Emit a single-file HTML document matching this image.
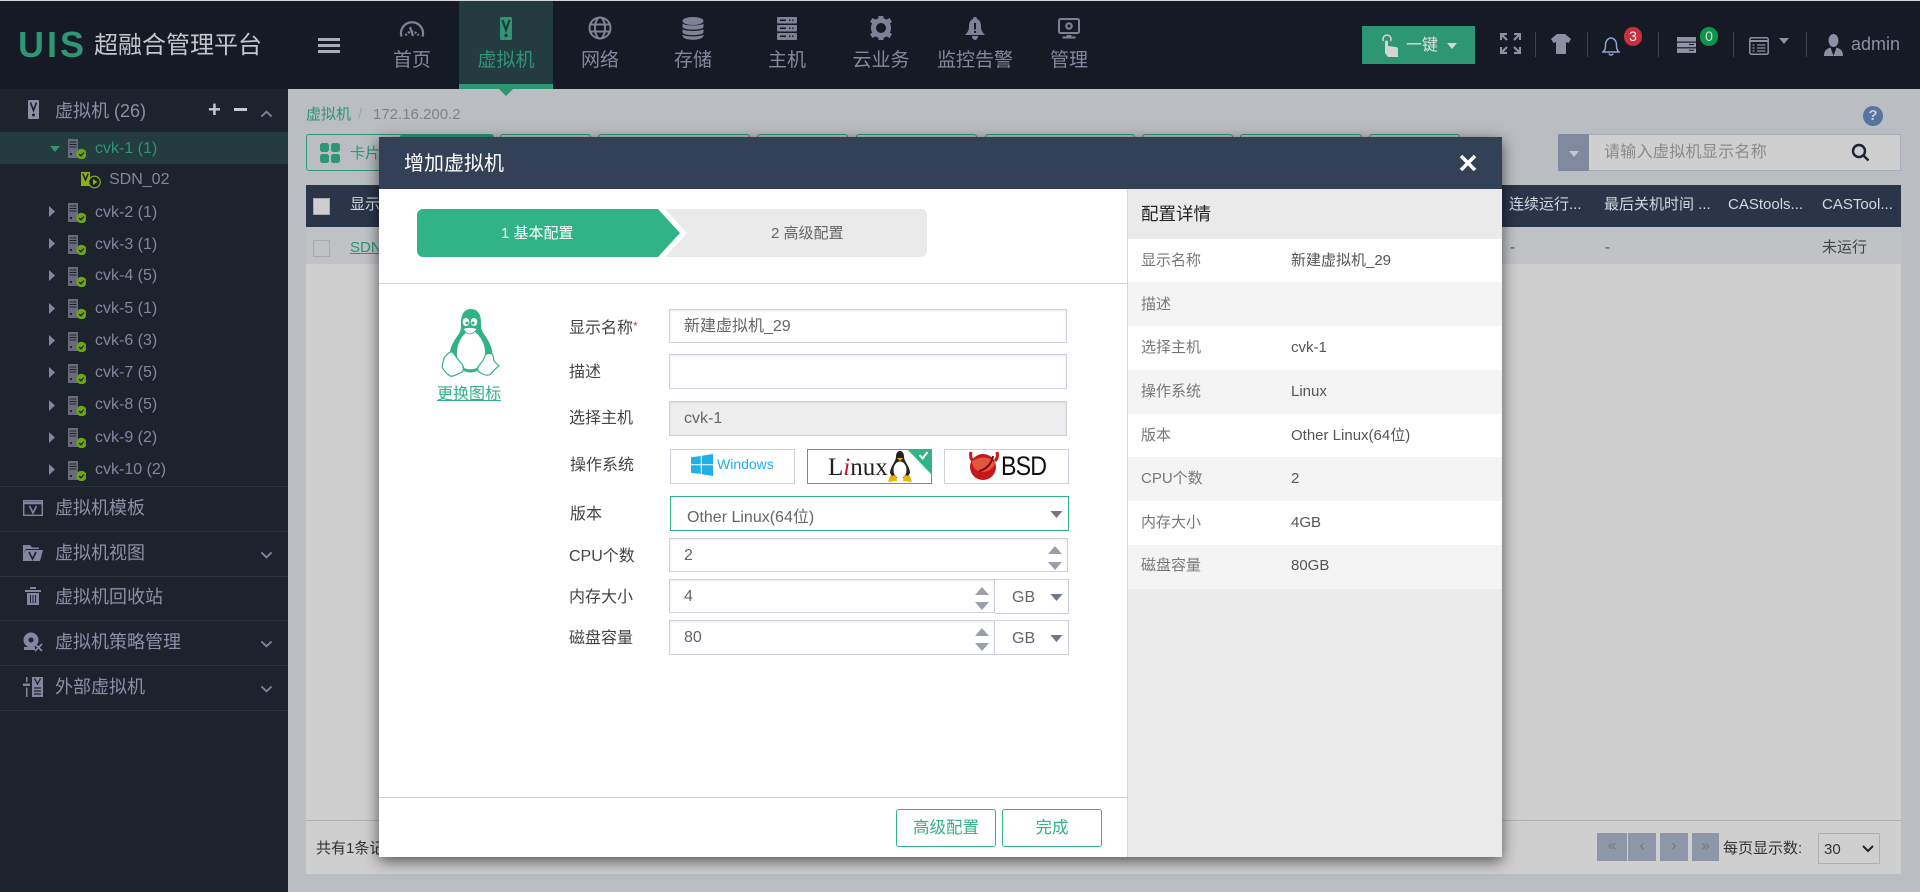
<!DOCTYPE html>
<html lang="zh"><head><meta charset="utf-8"><title>UIS</title>
<style>
*{box-sizing:border-box}
html,body{margin:0;padding:0;width:1920px;height:892px;overflow:hidden;background:#babdc2;font-family:"Liberation Sans","Noto Sans CJK SC",sans-serif}
.a{position:absolute}
.t{position:absolute;white-space:nowrap;line-height:20px;height:20px;margin-top:1px}
.nav{position:absolute;top:51px;width:94px;text-align:center;font-size:19px;line-height:20px;color:#83889c;white-space:nowrap}
.tree{font-size:16px;color:#8187a0}
.menu{font-size:18px;color:#8b90a6}
.lab{font-size:16px;color:#444}
.val{font-size:16px;color:#666}
.rl{font-size:15px;color:#777;left:1141px}
.rv{font-size:15px;color:#555;left:1291px}
.inp{position:absolute;background:#fff;border:1px solid #cfcfdc;box-shadow:inset 0 1px 2px rgba(0,0,0,.08)}
.div{position:absolute;width:1px;top:32px;height:25px;background:#3e424f}
.sep{position:absolute;left:0;width:288px;height:1px;background:#2c333d}
.tab{position:absolute;top:134px;height:37px;border:1px solid #2d9673;border-radius:3px}
.th{font-size:15px;color:#d4d8e0}
.pg{position:absolute;top:833px;height:28px;background:#8e97a9;color:#6f7788;font-size:15px;text-align:center;line-height:26px}
</style></head><body>
<svg width="0" height="0" style="position:absolute"><defs>
<symbol id="srv" viewBox="0 0 18 20"><rect x="0" y="0" width="10" height="19" fill="#666c7c"/><path d="M1.5 3h7M1.5 5.5h7M1.5 8h7" stroke="#1c232c" stroke-width="1"/><rect x="2" y="14" width="2" height="2" fill="#1c232c"/><circle cx="13.5" cy="15" r="5.2" fill="#6aa512"/><path d="M11.200 15l1.700 1.800 3-3.200" fill="none" stroke="#1c232c" stroke-width="1.300"/></symbol>
<symbol id="chev" viewBox="0 0 14 8"><path d="M1.5 1.2L7 6.5l5.5-5.3" fill="none" stroke="#7b84a0" stroke-width="2"/></symbol>
<symbol id="tri" viewBox="0 0 14 8"><path d="M0 0h14L7 8z"/></symbol>
</defs></svg>

<!-- header -->
<div class="a" style="left:0;top:0;width:1920px;height:1px;background:#d8d8d8"></div>
<div class="a" style="left:0;top:1px;width:1920px;height:88px;background:#161a25"></div>
<div class="t" style="left:18px;top:25px;margin-top:0;height:40px;line-height:40px;font-size:36px;font-weight:bold;color:#2d9673;letter-spacing:3px">UIS</div>
<div class="t" style="left:94px;top:33px;height:24px;line-height:24px;font-size:24px;color:#c4c6cc">超融合管理平台</div>
<div class="a" style="left:318px;top:38px;width:22px;height:3px;background:#a9adb9"></div>
<div class="a" style="left:318px;top:44px;width:22px;height:3px;background:#a9adb9"></div>
<div class="a" style="left:318px;top:50px;width:22px;height:3px;background:#a9adb9"></div>

<div class="a" style="left:459px;top:1px;width:94px;height:83px;background:#243b3f"></div>
<div class="a" style="left:459px;top:84px;width:94px;height:5px;background:#2d9673"></div>
<svg class="a" style="left:499px;top:89px" width="14" height="7"><path d="M0 0h14L7 7z" fill="#2d9673"/></svg>

<div class="nav" style="left:365px">首页</div>
<div class="nav" style="left:459px;color:#2d9673">虚拟机</div>
<div class="nav" style="left:553px">网络</div>
<div class="nav" style="left:646px">存储</div>
<div class="nav" style="left:740px">主机</div>
<div class="nav" style="left:834px">云业务</div>
<div class="nav" style="left:928px">监控告警</div>
<div class="nav" style="left:1022px">管理</div>

<!-- nav icons -->
<svg class="a" style="left:399px;top:20px" width="26" height="18" viewBox="0 0 26 18"><path d="M2.500 16.500A11 11 0 1 1 23.500 16.500" fill="none" stroke="#7d8296" stroke-width="2.200"/><path d="M6.500 15.500A7.500 7.500 0 0 1 19.500 15.500" fill="none" stroke="#7d8296" stroke-width="2.200" stroke-dasharray="2 1.500"/><path d="M11 7l3 9" stroke="#7d8296" stroke-width="2.200"/></svg>
<svg class="a" style="left:500px;top:17px" width="12" height="23" viewBox="0 0 12 23"><rect width="12" height="23" rx="1.500" fill="#2d9673"/><path d="M2.500 3l3.500 10 3.500-10" fill="none" stroke="#243b3f" stroke-width="2.200"/><circle cx="6" cy="18.500" r="1.800" fill="#243b3f"/></svg>
<svg class="a" style="left:588px;top:16px" width="24" height="24" viewBox="0 0 24 24" fill="none" stroke="#7d8296" stroke-width="2"><circle cx="12" cy="12" r="10.500"/><ellipse cx="12" cy="12" rx="5" ry="10.500"/><path d="M2 8.500h20M2 15.500h20"/></svg>
<svg class="a" style="left:682px;top:17px" width="22" height="23" viewBox="0 0 22 23" fill="#7d8296"><ellipse cx="11" cy="4" rx="10.500" ry="4"/><path d="M.5 6.500c2 2.500 19 2.500 21 0v3.500c-1 3.500-20 3.500-21 0zM.5 12c2 2.500 19 2.500 21 0v3.500c-1 3.500-20 3.500-21 0zM.5 17.500c2 2.500 19 2.500 21 0V19c-1 5-20 5-21 0z"/></svg>
<svg class="a" style="left:777px;top:17px" width="20" height="23" viewBox="0 0 20 23" fill="#7d8296"><rect width="20" height="6.500" rx="1"/><rect y="8" width="20" height="6.500" rx="1"/><rect y="16" width="20" height="7" rx="1"/><path d="M3 2.500h6v1.500H3zM12 2.500h1.500v1.500H12zM15 2.500h1.500v1.500H15zM3 10.500h6V12H3zM12 10.500h1.500V12H12zM15 10.500h1.500V12H15zM3 18.500h6V20H3zM12 18.500h1.500V20H12zM15 18.500h1.500V20H15z" fill="#161a25"/></svg>
<svg class="a" style="left:869px;top:16px" width="24" height="24" viewBox="0 0 24 24"><circle cx="12" cy="12" r="7.500" fill="none" stroke="#7d8296" stroke-width="5"/><path d="M9.500 0h5v5h-5zM9.500 19h5v5h-5zM1 6l2.500-4 4.500 2.500-2.500 4zM1 18l2.500 4 4.500-2.500-2.500-4zM23 6l-2.500-4-4.500 2.500 2.500 4zM23 18l-2.500 4-4.500-2.500 2.500-4z" fill="#7d8296"/></svg>
<svg class="a" style="left:965px;top:17px" width="20" height="23" viewBox="0 0 20 23"><path d="M10 0c1.500 0 2 1 2 2 3 1 4 4 4 7 0 4 1 6 4 9H0c3-3 4-5 4-9 0-3 1-6 4-7 0-1 .5-2 2-2z" fill="#7d8296"/><path d="M7 19h6c0 2-1.300 4-3 4s-3-2-3-4z" fill="#7d8296"/><rect x="9" y="6" width="2" height="6.500" fill="#161a25"/><rect x="9" y="14" width="2" height="2" fill="#161a25"/></svg>
<svg class="a" style="left:1058px;top:18px" width="22" height="21" viewBox="0 0 22 21"><rect x="1" y="1" width="20" height="14" rx="1.500" fill="none" stroke="#7d8296" stroke-width="2"/><path d="M8.500 17h5v1.500h4V20.500h-13V18.500h4z" fill="#7d8296"/><circle cx="11" cy="8" r="2.700" fill="none" stroke="#7d8296" stroke-width="2.200"/></svg>

<!-- header right -->
<div class="a" style="left:1362px;top:26px;width:113px;height:38px;background:#2d9673"></div>
<svg class="a" style="left:1381px;top:33px" width="20" height="24" viewBox="0 0 20 24"><path d="M4 20V9c0-2 3-2 3 0v4l8 1c2 .500 2 2 2 3v7H7z" fill="#d5d5d0"/><path d="M2.500 8a4 4 0 1 1 7 0" fill="none" stroke="#d5d5d0" stroke-width="1.500"/></svg>
<div class="t" style="left:1406px;top:35px;font-size:16px;color:#dfe3e0">一键</div>
<svg class="a" style="left:1447px;top:43px" width="10" height="6"><path d="M0 0h10L5 6z" fill="#d5d8d5"/></svg>

<svg class="a" style="left:1500px;top:33px" width="21" height="21" viewBox="0 0 21 21" fill="none" stroke="#8b90a3" stroke-width="2.200"><path d="M1 7V1h6M1 1l6 6M14 1h6v6M20 1l-6 6M1 14v6h6M1 20l6-6M20 14v6h-6M20 20l-6-6"/></svg>
<div class="div" style="left:1535px"></div>
<svg class="a" style="left:1551px;top:34px" width="20" height="20" viewBox="0 0 20 20"><path d="M6 0h8l6 5-2.500 4-2.500-1v12H5V8L2.500 9 0 5z" fill="#8b90a3"/></svg>
<div class="div" style="left:1587px"></div>
<svg class="a" style="left:1602px;top:36px" width="18" height="20" viewBox="0 0 18 20" fill="none" stroke="#8fa4d0" stroke-width="1.500"><path d="M1 16c2-2 2.500-3 2.500-7S6 2 9 2s5.500 3 5.500 7 .5 5 2.500 7zM7 17.500c.5 2 3.500 2 4 0"/></svg>
<div class="a" style="left:1624px;top:27px;width:18px;height:19px;border-radius:9px;background:#c8303f;color:#eee;font-size:14px;line-height:19px;text-align:center">3</div>
<div class="div" style="left:1658px"></div>
<svg class="a" style="left:1677px;top:37px" width="20" height="16" viewBox="0 0 20 16"><rect width="19" height="4.500" fill="#8f94a8"/><rect y="5.700" width="19" height="4.500" fill="#8f94a8"/><rect y="11.400" width="19" height="4.500" fill="#8f94a8"/><path d="M12 7.500h5M12 13.200h5" stroke="#161a25" stroke-width="1"/></svg>
<div class="a" style="left:1700px;top:27px;width:18px;height:19px;border-radius:9px;background:#0b964b;color:#ddd;font-size:14px;line-height:19px;text-align:center">0</div>
<div class="div" style="left:1733px"></div>
<svg class="a" style="left:1749px;top:37px" width="20" height="18" viewBox="0 0 20 18" fill="none" stroke="#8b90a3" stroke-width="1.500"><rect x=".8" y=".8" width="18.400" height="16.400" rx="1.500"/><path d="M1 4h18" stroke-width="2"/><path d="M3.500 8h2M8 8h8.500M3.500 11h2M8 11h8.500M3.500 14h2M8 14h8.500" stroke-width="1.300"/></svg>
<svg class="a" style="left:1779px;top:38px" width="10" height="6"><path d="M0 0h10L5 6z" fill="#8b90a3"/></svg>
<div class="div" style="left:1806px"></div>
<svg class="a" style="left:1824px;top:34px" width="19" height="22" viewBox="0 0 19 22"><ellipse cx="9.500" cy="6.500" rx="5" ry="6.500" fill="#8b90a3"/><path d="M0 22c0-5 2-7 6.500-8.500L9.500 22l3-8.500C17 15 19 17 19 22z" fill="#8b90a3"/></svg>
<div class="t" style="left:1851px;top:33px;font-size:18px;color:#8b90a5">admin</div>

<!-- sidebar -->
<div class="a" style="left:0;top:89px;width:288px;height:803px;background:#1c232c"></div>
<div class="a" style="left:0;top:132px;width:288px;height:32px;background:#243b3f"></div>
<svg class="a" style="left:28px;top:100px" width="11" height="19" viewBox="0 0 11 19"><rect width="11" height="19" rx="1" fill="#8b90a3"/><path d="M2.500 2.500l3 8 3-8" fill="none" stroke="#1c232c" stroke-width="1.700"/><circle cx="5.500" cy="15" r="1.500" fill="#1c232c"/></svg>
<div class="t menu" style="left:55px;top:100px">虚拟机 (26)</div>
<div class="t" style="left:208px;top:98px;font-size:22px;font-weight:bold;color:#c6c9d2;line-height:22px;height:22px">+</div>
<div class="a" style="left:234px;top:108px;width:13px;height:3px;background:#c6c9d2"></div>
<svg class="a" style="left:260px;top:110px;transform:rotate(180deg)" width="13" height="8"><use href="#chev"/></svg>

<svg class="a" style="left:50px;top:146px" width="10" height="6"><path d="M0 0h10L5 6z" fill="#2d9673"/></svg>
<svg class="a" style="left:68px;top:139px" width="18" height="20"><use href="#srv"/></svg>
<div class="t tree" style="left:95px;top:138px;color:#2d9673">cvk-1 (1)</div>
<svg class="a" style="left:81px;top:172px" width="20" height="17" viewBox="0 0 20 17"><rect width="9" height="14" fill="#8db018"/><path d="M1.800 1.500l2.700 6.500 2.700-6.500" fill="none" stroke="#1c232c" stroke-width="1.500"/><circle cx="13.500" cy="10" r="5.800" fill="#1c232c" stroke="#8db018" stroke-width="1.100"/><path d="M12 7l4.300 3-4.300 3z" fill="#8db018"/></svg>
<div class="t tree" style="left:109px;top:169px">SDN_02</div>

<!-- tree rows -->
<svg class="a" style="left:49px;top:206px" width="7" height="11"><path d="M0 0l6 5.500L0 11z" fill="#8187a0"/></svg>
<svg class="a" style="left:68px;top:203px" width="18" height="20"><use href="#srv"/></svg>
<div class="t tree" style="left:95px;top:202px">cvk-2 (1)</div>
<svg class="a" style="left:49px;top:238px" width="7" height="11"><path d="M0 0l6 5.500L0 11z" fill="#8187a0"/></svg>
<svg class="a" style="left:68px;top:235px" width="18" height="20"><use href="#srv"/></svg>
<div class="t tree" style="left:95px;top:234px">cvk-3 (1)</div>
<svg class="a" style="left:49px;top:270px" width="7" height="11"><path d="M0 0l6 5.500L0 11z" fill="#8187a0"/></svg>
<svg class="a" style="left:68px;top:267px" width="18" height="20"><use href="#srv"/></svg>
<div class="t tree" style="left:95px;top:265px">cvk-4 (5)</div>
<svg class="a" style="left:49px;top:303px" width="7" height="11"><path d="M0 0l6 5.500L0 11z" fill="#8187a0"/></svg>
<svg class="a" style="left:68px;top:299px" width="18" height="20"><use href="#srv"/></svg>
<div class="t tree" style="left:95px;top:298px">cvk-5 (1)</div>
<svg class="a" style="left:49px;top:335px" width="7" height="11"><path d="M0 0l6 5.500L0 11z" fill="#8187a0"/></svg>
<svg class="a" style="left:68px;top:332px" width="18" height="20"><use href="#srv"/></svg>
<div class="t tree" style="left:95px;top:330px">cvk-6 (3)</div>
<svg class="a" style="left:49px;top:367px" width="7" height="11"><path d="M0 0l6 5.500L0 11z" fill="#8187a0"/></svg>
<svg class="a" style="left:68px;top:364px" width="18" height="20"><use href="#srv"/></svg>
<div class="t tree" style="left:95px;top:362px">cvk-7 (5)</div>
<svg class="a" style="left:49px;top:400px" width="7" height="11"><path d="M0 0l6 5.500L0 11z" fill="#8187a0"/></svg>
<svg class="a" style="left:68px;top:396px" width="18" height="20"><use href="#srv"/></svg>
<div class="t tree" style="left:95px;top:394px">cvk-8 (5)</div>
<svg class="a" style="left:49px;top:432px" width="7" height="11"><path d="M0 0l6 5.500L0 11z" fill="#8187a0"/></svg>
<svg class="a" style="left:68px;top:428px" width="18" height="20"><use href="#srv"/></svg>
<div class="t tree" style="left:95px;top:427px">cvk-9 (2)</div>
<svg class="a" style="left:49px;top:464px" width="7" height="11"><path d="M0 0l6 5.500L0 11z" fill="#8187a0"/></svg>
<svg class="a" style="left:68px;top:461px" width="18" height="20"><use href="#srv"/></svg>
<div class="t tree" style="left:95px;top:459px">cvk-10 (2)</div>

<div class="sep" style="top:486px"></div>
<div class="sep" style="top:531px"></div>
<div class="sep" style="top:576px"></div>
<div class="sep" style="top:620px"></div>
<div class="sep" style="top:665px"></div>
<div class="sep" style="top:710px"></div>

<svg class="a" style="left:23px;top:500px" width="20" height="16" viewBox="0 0 20 16" fill="none" stroke="#8187a0"><rect x=".7" y=".7" width="18.600" height="14.600" stroke-width="1.400"/><path d="M1 3h18" stroke-width="2.400"/><path d="M6.500 6l3.500 7 3.500-7" stroke-width="1.700"/></svg>
<div class="t menu" style="left:55px;top:497px">虚拟机模板</div>
<svg class="a" style="left:23px;top:545px" width="20" height="16" viewBox="0 0 20 16"><path d="M0 0h7l2 2.500h7V4H3L0 9z M3 5h17l-3 11H0V9z" fill="#8187a0"/><path d="M6 7l3.500 7L13 7" fill="none" stroke="#1c232c" stroke-width="1.700"/></svg>
<div class="t menu" style="left:55px;top:542px">虚拟机视图</div>
<svg class="a" style="left:260px;top:551px" width="13" height="8"><use href="#chev"/></svg>
<svg class="a" style="left:25px;top:587px" width="16" height="18" viewBox="0 0 16 18" fill="#8187a0"><path d="M0 3h16v2H0zM5 0h6v2H5zM2 6h12v12H2z"/><path d="M5.500 8v8M8 8v8M10.500 8v8" stroke="#1c232c" stroke-width="1"/></svg>
<div class="t menu" style="left:55px;top:586px">虚拟机回收站</div>
<svg class="a" style="left:23px;top:632px" width="20" height="20" viewBox="0 0 20 20"><circle cx="8" cy="8" r="7.500" fill="#8187a0"/><circle cx="8" cy="8" r="2.500" fill="#1c232c"/><rect x="1" y="15" width="11" height="3" fill="#8187a0"/><path d="M12 12l7 7M19 12l-7 7" stroke="#8187a0" stroke-width="1.800"/></svg>
<div class="t menu" style="left:55px;top:631px">虚拟机策略管理</div>
<svg class="a" style="left:260px;top:640px" width="13" height="8"><use href="#chev"/></svg>
<svg class="a" style="left:23px;top:677px" width="20" height="20" viewBox="0 0 20 20"><path d="M3 0h1.500v5H3zM0 6.500h7v2.500H0zM3 10.500h1.500V20H3z" fill="#8187a0"/><rect x="9" y="0" width="11" height="20" fill="#8187a0"/><path d="M11.500 1.500l3 5.500 3-5.500" fill="none" stroke="#1c232c" stroke-width="1.300"/><path d="M11 11h7M11 14h7M11 17h7" stroke="#1c232c" stroke-width="1.200"/></svg>
<div class="t menu" style="left:55px;top:676px">外部虚拟机</div>
<svg class="a" style="left:260px;top:685px" width="13" height="8"><use href="#chev"/></svg>

<!-- content -->
<div class="t" style="left:306px;top:104px;font-size:15px;color:#2f9473">虚拟机</div>
<div class="t" style="left:358px;top:104px;font-size:15px;color:#a1a4aa">/</div>
<div class="t" style="left:373px;top:104px;font-size:15px;color:#808287">172.16.200.2</div>
<svg class="a" style="left:1863px;top:106px" width="20" height="20" viewBox="0 0 20 20"><circle cx="10" cy="10" r="10" fill="#55749f"/></svg>
<div class="t" style="left:1863px;top:105px;width:20px;text-align:center;font-size:15px;font-weight:bold;color:#c8cdd6">?</div>

<div class="tab" style="left:306px;width:100px"></div>
<div class="tab" style="left:400px;width:94px;background:#2d9673"></div>
<div class="tab" style="left:500px;width:91px"></div>
<div class="tab" style="left:598px;width:152px"></div>
<div class="tab" style="left:757px;width:91px"></div>
<div class="tab" style="left:856px;width:121px"></div>
<div class="tab" style="left:985px;width:150px"></div>
<div class="tab" style="left:1142px;width:91px"></div>
<div class="tab" style="left:1240px;width:122px"></div>
<div class="tab" style="left:1369px;width:91px"></div>
<svg class="a" style="left:320px;top:143px" width="20" height="20" viewBox="0 0 20 20" fill="#2d9673"><rect width="9" height="9" rx="2.500"/><rect x="11" width="9" height="9" rx="2.500"/><rect y="11" width="9" height="9" rx="2.500"/><rect x="11" y="11" width="9" height="9" rx="2.500"/></svg>
<div class="t" style="left:350px;top:143px;font-size:15px;color:#2d9673">卡片</div>

<div class="a" style="left:1558px;top:134px;width:343px;height:37px;background:#cfcfcf;border:1px solid #a9acb8"></div>
<div class="a" style="left:1558px;top:134px;width:31px;height:37px;background:#8189a0"></div>
<svg class="a" style="left:1569px;top:151px" width="10" height="6"><path d="M0 0h10L5 6z" fill="#c4c7d0"/></svg>
<div class="t" style="left:1604px;top:142px;font-size:16px;letter-spacing:.3px;color:#8a8a8a">请输入虚拟机显示名称</div>
<svg class="a" style="left:1851px;top:143px" width="19" height="19" viewBox="0 0 19 19" fill="none" stroke="#1b2430" stroke-width="2.400"><circle cx="8" cy="8" r="6"/><path d="M12.500 12.500l5 5"/></svg>

<div class="a" style="left:306px;top:185px;width:1595px;height:42px;background:#2a3549"></div>
<div class="a" style="left:306px;top:227px;width:1595px;height:37px;background:#c0c2c6"></div>
<div class="a" style="left:306px;top:264px;width:1595px;height:610px;background:#cfcfcf"></div>
<div class="a" style="left:306px;top:820px;width:1595px;height:1px;background:#aeb0b4"></div>
<div class="a" style="left:313px;top:198px;width:17px;height:17px;background:#cfcfcf;border:1px solid #a7a9b0"></div>
<div class="a" style="left:313px;top:240px;width:17px;height:17px;border:1px solid #a7a9b0"></div>
<div class="t th" style="left:350px;top:194px">显示</div>
<div class="t" style="left:350px;top:237px;font-size:15px;color:#2d9673;text-decoration:underline">SDN</div>
<div class="t th" style="left:1509px;top:194px">连续运行...</div>
<div class="t th" style="left:1604px;top:194px">最后关机时间 ...</div>
<div class="t th" style="left:1728px;top:194px">CAStools...</div>
<div class="t th" style="left:1822px;top:194px">CASTool...</div>
<div class="t" style="left:1510px;top:237px;font-size:15px;color:#555">-</div>
<div class="t" style="left:1605px;top:237px;font-size:15px;color:#555">-</div>
<div class="t" style="left:1822px;top:237px;font-size:15px;color:#444">未运行</div>
<div class="t" style="left:316px;top:838px;font-size:15px;color:#333">共有1条记录</div>

<div class="pg" style="left:1597px;width:30px">«</div>
<div class="pg" style="left:1628px;width:28px">‹</div>
<div class="pg" style="left:1660px;width:28px">›</div>
<div class="pg" style="left:1692px;width:27px">»</div>
<div class="t" style="left:1723px;top:838px;font-size:15px;color:#333">每页显示数:</div>
<div class="a" style="left:1818px;top:833px;width:62px;height:31px;border:1px solid #aeb0b4"></div>
<div class="t" style="left:1824px;top:839px;font-size:15px;color:#333">30</div>
<svg class="a" style="left:1862px;top:845px" width="12" height="8"><path d="M1 1l5 5 5-5" fill="none" stroke="#222" stroke-width="2"/></svg>

<!-- modal -->
<div class="a" style="left:379px;top:137px;width:1123px;height:720px;background:#fff;box-shadow:0 4px 14px rgba(0,0,0,.6)"></div>
<div class="a" style="left:379px;top:137px;width:1123px;height:52px;background:#334156"></div>
<div class="t" style="left:404px;top:153px;font-size:20px;color:#fff">增加虚拟机</div>
<svg class="a" style="left:1459px;top:154px" width="18" height="18"><path d="M2 2l14 14M16 2L2 16" stroke="#fff" stroke-width="3.500"/></svg>

<!-- steps -->
<svg class="a" style="left:417px;top:209px" width="511" height="48" viewBox="0 0 511 48"><path d="M241 0H504a6 6 0 0 1 6 6V42a6 6 0 0 1-6 6H241z" fill="#eaeaea"/><path d="M241 0h7l22 24-22 24h-7z" fill="#fff"/><path d="M6 0H241L263 24 241 48H6a6 6 0 0 1-6-6V6a6 6 0 0 1 6-6z" fill="#32b287"/></svg>
<div class="t" style="left:501px;top:223px;font-size:15px;color:#fff">1 基本配置</div>
<div class="t" style="left:771px;top:223px;font-size:15px;color:#666">2 高级配置</div>
<div class="a" style="left:379px;top:283px;width:749px;height:1px;background:#cfcfd6"></div>

<!-- penguin -->
<svg class="a" style="left:441px;top:309px" width="59" height="68" viewBox="0 0 59 68">
<path d="M30 0C23 0 20 6 20 13c0 6 0 9-3 13C12 33 8 40 9 47l3 8h36l3-6c2-8-3-17-8-24-3-4-3-8-3-12C40 6 37 0 30 0z" fill="#32b287"/>
<path d="M30 21c-7 2-15 13-14 25 1 8 6 12 14 12s13-4 14-12c1-12-7-23-14-25z" fill="#fff"/>
<ellipse cx="25" cy="13" rx="3.300" ry="4" fill="#fff"/><ellipse cx="33" cy="13" rx="3.300" ry="4" fill="#fff"/>
<circle cx="26" cy="14" r="1.500" fill="#32b287"/><circle cx="32" cy="14" r="1.500" fill="#32b287"/>
<path d="M22 20c3-2 11-2 14 0-2 3-4 5-7 5s-5-2-7-5z" fill="#fff" stroke="#32b287" stroke-width=".8"/>
<path d="M1 58l2-9c2-2 5-7 8-6 3 2 5 7 10 12 2 3 2 6 0 8-4 2-9 5-12 4-3-2-6-5-8-9z" fill="#fff" stroke="#32b287" stroke-width="1.200"/>
<path d="M58 57l-5-5c-1-2 0-6-2-7-3-1-6-1-7 2-1 4-5 8-7 11-1 3 0 5 3 6 3 2 7 3 10 1 2-3 5-6 8-8z" fill="#fff" stroke="#32b287" stroke-width="1.200"/>
<path d="M21 58c5 3 12 3 17 0l-2 4c-4 2-9 2-13 0z" fill="#32b287"/>
</svg>
<div class="t" style="left:437px;top:384px;font-size:16px;color:#32b287;text-decoration:underline">更换图标</div>

<!-- form -->
<div class="t lab" style="left:569px;top:315px">显示名称<span style="color:#e33;font-size:12px;vertical-align:3px">*</span></div>
<div class="inp" style="left:669px;top:309px;width:398px;height:34px"></div>
<div class="t val" style="left:684px;top:316px">新建虚拟机_29</div>
<div class="t lab" style="left:569px;top:362px">描述</div>
<div class="inp" style="left:669px;top:354px;width:398px;height:35px"></div>
<div class="t lab" style="left:569px;top:408px">选择主机</div>
<div class="inp" style="left:669px;top:401px;width:398px;height:35px;background:#eeeeee"></div>
<div class="t val" style="left:684px;top:408px">cvk-1</div>
<div class="t lab" style="left:570px;top:455px">操作系统</div>

<div class="a" style="left:670px;top:449px;width:125px;height:35px;border:1px solid #cfcfdc"></div>
<svg class="a" style="left:691px;top:454px" width="22" height="22" viewBox="0 0 22 22" fill="#1fb0ea"><path d="M0 3.300L9.800 2v8.300H0zM10.800 1.800L22 0v10.300H10.800zM0 11.300h9.800V20L0 18.700zM10.800 11.300H22V22l-11.200-1.800z"/></svg>
<div class="t" style="left:717px;top:453px;font-size:14px;color:#1fb0ea">Windows</div>

<div class="a" style="left:807px;top:449px;width:125px;height:35px;border:1px solid #32b287"></div>
<div class="t" style="left:828px;top:455px;font-family:'Liberation Serif',serif;font-size:25px;color:#222;height:24px;line-height:24px">L<span style="color:#c4162a;font-style:italic">i</span>nux</div>
<svg class="a" style="left:887px;top:451px" width="26" height="32" viewBox="0 0 26 32"><path d="M13 0c-3 0-4 3-4 6 0 4-6 10-6 16l3 5h14l3-5c0-6-6-12-6-16 0-3-1-6-4-6z" fill="#222"/><ellipse cx="13" cy="19" rx="6.500" ry="8.500" fill="#fff"/><path d="M10 7h6l-3 3z" fill="#e8b400"/><path d="M1 31l2-6 6-1 1 6zM25 31l-2-6-6-1-1 6z" fill="#e8b400"/></svg>
<svg class="a" style="left:907px;top:449px" width="25" height="26" viewBox="0 0 25 26"><path d="M0 0h25v26z" fill="#32b287"/><path d="M12.500 6l3 3.500 5-6.500" fill="none" stroke="#fff" stroke-width="2"/></svg>

<div class="a" style="left:944px;top:449px;width:125px;height:35px;border:1px solid #cfcfdc"></div>
<svg class="a" style="left:968px;top:451px" width="32" height="30" viewBox="0 0 32 30"><path d="M3 1c-1 4 0 7 2 9M29 1c1 4 0 7-2 9" stroke="#c4181c" stroke-width="3" fill="none"/><circle cx="15" cy="16" r="13" fill="#c4181c"/><path d="M4 10c8-5 18-5 23 2-1 6-10 11-17 8-4-2-6-6-6-10z" fill="#e2573f"/><path d="M25 5c-1 8-8 14-14 15" stroke="#7a0e10" stroke-width="2" fill="none"/></svg>
<div class="t" style="left:1001px;top:454px;font-size:27px;color:#111;height:22px;line-height:22px;letter-spacing:-1px;transform-origin:0 50%;transform:scaleX(.86)">BSD</div>

<div class="t lab" style="left:570px;top:504px">版本</div>
<div class="a" style="left:670px;top:496px;width:399px;height:35px;border:1px solid #32b287"></div>
<div class="t val" style="left:687px;top:507px">Other Linux(64位)</div>
<svg class="a" style="left:1050px;top:511px" width="13" height="7"><use href="#tri" fill="#6f7889"/></svg>

<div class="t lab" style="left:569px;top:546px">CPU个数</div>
<div class="inp" style="left:669px;top:538px;width:399px;height:34px"></div>
<div class="t val" style="left:684px;top:545px">2</div>
<svg class="a" style="left:1048px;top:546px" width="14" height="8"><path d="M0 8h14L7 0z" fill="#9aa0aa"/></svg>
<svg class="a" style="left:1048px;top:562px" width="14" height="8"><path d="M0 0h14L7 8z" fill="#9aa0aa"/></svg>

<div class="t lab" style="left:569px;top:587px">内存大小</div>
<div class="inp" style="left:669px;top:579px;width:326px;height:34px"></div>
<div class="a" style="left:995px;top:579px;width:74px;height:35px;border:1px solid #cfcfdc;border-left:none"></div>
<div class="t val" style="left:684px;top:586px">4</div>
<svg class="a" style="left:975px;top:587px" width="14" height="8"><path d="M0 8h14L7 0z" fill="#9aa0aa"/></svg>
<svg class="a" style="left:975px;top:602px" width="14" height="8"><path d="M0 0h14L7 8z" fill="#9aa0aa"/></svg>
<div class="t val" style="left:1012px;top:587px">GB</div>
<svg class="a" style="left:1050px;top:594px" width="13" height="7"><use href="#tri" fill="#6f7889"/></svg>

<div class="t lab" style="left:569px;top:628px">磁盘容量</div>
<div class="inp" style="left:669px;top:620px;width:326px;height:35px"></div>
<div class="a" style="left:995px;top:620px;width:74px;height:35px;border:1px solid #cfcfdc;border-left:none"></div>
<div class="t val" style="left:684px;top:627px">80</div>
<svg class="a" style="left:975px;top:628px" width="14" height="8"><path d="M0 8h14L7 0z" fill="#9aa0aa"/></svg>
<svg class="a" style="left:975px;top:643px" width="14" height="8"><path d="M0 0h14L7 8z" fill="#9aa0aa"/></svg>
<div class="t val" style="left:1012px;top:628px">GB</div>
<svg class="a" style="left:1050px;top:635px" width="13" height="7"><use href="#tri" fill="#6f7889"/></svg>

<!-- footer -->
<div class="a" style="left:379px;top:797px;width:749px;height:1px;background:#cfcfd6"></div>
<div class="a" style="left:896px;top:809px;width:100px;height:38px;border:1px solid #32b287;border-radius:3px;color:#32b287;font-size:16.500px;text-align:center;line-height:36px">高级配置</div>
<div class="a" style="left:1002px;top:809px;width:100px;height:38px;border:1px solid #32b287;border-radius:3px;color:#32b287;font-size:16.500px;text-align:center;line-height:36px">完成</div>

<!-- right panel -->
<div class="a" style="left:1127px;top:189px;width:1px;height:668px;background:#d6d6dc"></div>
<div class="a" style="left:1128px;top:189px;width:374px;height:668px;background:#eaeaea"></div>
<div class="a" style="left:1128px;top:239px;width:374px;height:43px;background:#fff"></div>
<div class="a" style="left:1128px;top:282px;width:374px;height:44px;background:#f4f4f4"></div>
<div class="a" style="left:1128px;top:326px;width:374px;height:44px;background:#fff"></div>
<div class="a" style="left:1128px;top:370px;width:374px;height:44px;background:#f4f4f4"></div>
<div class="a" style="left:1128px;top:414px;width:374px;height:43px;background:#fff"></div>
<div class="a" style="left:1128px;top:457px;width:374px;height:44px;background:#f4f4f4"></div>
<div class="a" style="left:1128px;top:501px;width:374px;height:44px;background:#fff"></div>
<div class="a" style="left:1128px;top:545px;width:374px;height:44px;background:#f4f4f4"></div>
<div class="t" style="left:1141px;top:203px;font-size:17.500px;color:#222">配置详情</div>
<div class="t rl" style="top:250px">显示名称</div><div class="t rv" style="top:250px">新建虚拟机_29</div>
<div class="t rl" style="top:294px">描述</div>
<div class="t rl" style="top:337px">选择主机</div><div class="t rv" style="top:337px">cvk-1</div>
<div class="t rl" style="top:381px">操作系统</div><div class="t rv" style="top:381px">Linux</div>
<div class="t rl" style="top:425px">版本</div><div class="t rv" style="top:425px">Other Linux(64位)</div>
<div class="t rl" style="top:468px">CPU个数</div><div class="t rv" style="top:468px">2</div>
<div class="t rl" style="top:512px">内存大小</div><div class="t rv" style="top:512px">4GB</div>
<div class="t rl" style="top:555px">磁盘容量</div><div class="t rv" style="top:555px">80GB</div>
</body></html>
